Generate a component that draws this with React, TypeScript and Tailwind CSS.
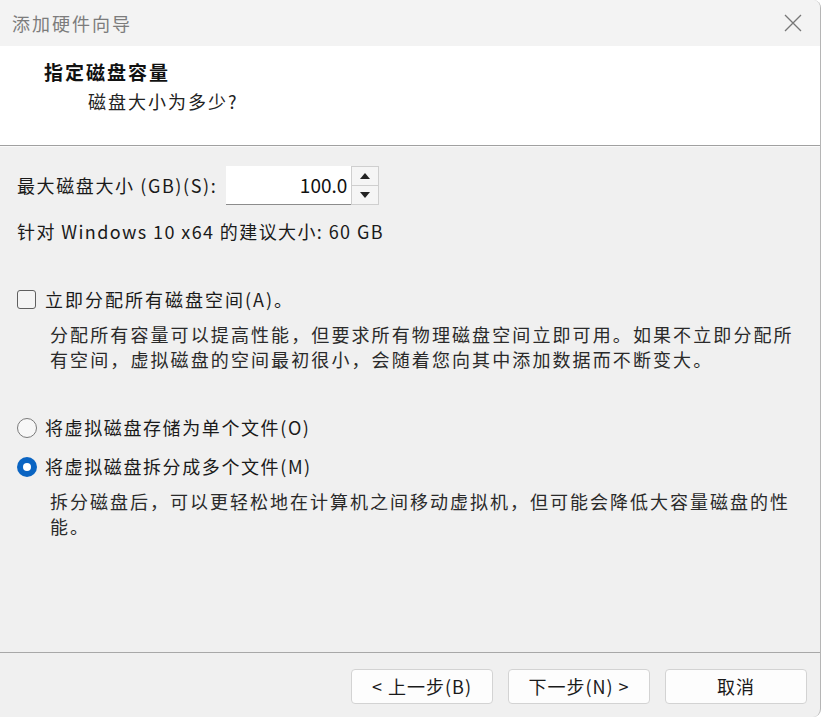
import React from 'react';

const cjk = { fontFamily: '"Noto Sans CJK SC", "Liberation Sans", sans-serif' };

function Spinner() {
  return (
    <div className="flex h-[39px] items-stretch">
      <div className="flex w-[125px] items-center justify-end border-b border-[#8c8c8c] bg-white pr-[4px] text-[19px] text-[#111]">
        100.0
      </div>
      <div className="flex w-[28px] flex-col border border-[#cfcfcf] bg-[#f5f5f5]">
        <div className="flex flex-1 items-center justify-center border-b border-[#cfcfcf]">
          <svg width="10" height="6" viewBox="0 0 10 6"><path d="M5 0 L10 6 L0 6 Z" fill="#222" /></svg>
        </div>
        <div className="flex flex-1 items-center justify-center">
          <svg width="10" height="6" viewBox="0 0 10 6"><path d="M0 0 L10 0 L5 6 Z" fill="#222" /></svg>
        </div>
      </div>
    </div>
  );
}

function Radio({ checked }: { checked?: boolean }) {
  if (checked) {
    return (
      <div className="flex h-[20px] w-[20px] items-center justify-center rounded-full bg-[#0a64c2]">
        <div className="h-[8px] w-[8px] rounded-full bg-white" />
      </div>
    );
  }
  return <div className="h-[20px] w-[20px] rounded-full border border-[#7a7a7a] bg-[#f7f7f7]" />;
}

function Btn({ children }: { children: React.ReactNode }) {
  return (
    <div className="flex h-[35px] w-[142px] items-center justify-center rounded-[4px] border border-[#d3d3d3] bg-[#fdfdfd] text-[18px] tracking-[1px] text-[#1a1a1a]">
      {children}
    </div>
  );
}

export default function App() {
  return (
    <div className="h-[717px] w-[823px] overflow-hidden bg-white" style={cjk}>
      <div className="flex h-[717px] w-[821px] flex-col overflow-hidden rounded-r-[8px] border-r border-[#b5b5b5] bg-[#f0f0f0]">
        {/* title bar */}
        <div className="flex h-[46px] shrink-0 items-center justify-between bg-[#f3f3f3] pl-[12px] pr-[18px]">
          <span className="text-[18px] tracking-[2px] text-[#7c7c7c]">添加硬件向导</span>
          <svg width="18" height="18" viewBox="0 0 18 18">
            <path d="M1 1 L17 17 M17 1 L1 17" stroke="#777" strokeWidth="1.3" fill="none" />
          </svg>
        </div>

        {/* header */}
        <div className="flex h-[99px] shrink-0 flex-col bg-white pl-[44px] pt-[14px]">
          <div className="text-[19px] font-bold leading-[24px] tracking-[2px] text-[#111]">指定磁盘容量</div>
          <div className="mt-[5px] pl-[44px] text-[18px] leading-[24px] tracking-[2px] text-[#222]">磁盘大小为多少?</div>
        </div>
        <div className="h-px shrink-0 bg-[#a0a0a0]" />
        <div className="h-px shrink-0 bg-[#fafafa]" />

        {/* body */}
        <div className="flex flex-1 flex-col px-[17px] pt-[19px] text-[#1a1a1a]">
          <div className="flex items-center gap-[9px]">
            <span className="whitespace-nowrap text-[18px] tracking-[1.6px]">最大磁盘大小 (GB)(S):</span>
            <Spinner />
          </div>
          <div className="mt-[11px] whitespace-nowrap text-[18px] leading-[30px] tracking-[1.4px]">针对 Windows 10 x64 的建议大小: 60 GB</div>

          <div className="mt-[40px] flex items-center gap-[9px]">
            <div className="h-[19px] w-[19px] rounded-[3px] border border-[#5f5f5f] bg-[#f4f4f4]" />
            <span className="text-[18px] tracking-[2px]">立即分配所有磁盘空间(A)。</span>
          </div>
          <div className="mt-[9px] whitespace-nowrap pl-[33px] text-[18px] leading-[25px] tracking-[2.1px] text-[#2a2a2a]">
            <div>分配所有容量可以提高性能，但要求所有物理磁盘空间立即可用。如果不立即分配所</div>
            <div>有空间，虚拟磁盘的空间最初很小，会随着您向其中添加数据而不断变大。</div>
          </div>

          <div className="mt-[42px] flex items-center gap-[8px]">
            <Radio />
            <span className="text-[18px] tracking-[1.6px]">将虚拟磁盘存储为单个文件(O)</span>
          </div>
          <div className="mt-[12px] flex items-center gap-[8px]">
            <Radio checked />
            <span className="text-[18px] tracking-[1.6px]">将虚拟磁盘拆分成多个文件(M)</span>
          </div>
          <div className="mt-[9px] whitespace-nowrap pl-[33px] text-[18px] leading-[25px] tracking-[2px] text-[#2a2a2a]">
            <div>拆分磁盘后，可以更轻松地在计算机之间移动虚拟机，但可能会降低大容量磁盘的性</div>
            <div>能。</div>
          </div>
        </div>

        {/* footer */}
        <div className="h-px shrink-0 bg-[#a8a8a8]" />
        <div className="flex h-[64px] shrink-0 items-start justify-end gap-[15px] pr-[13px] pt-[16px]">
          <Btn>&lt; 上一步(B)</Btn>
          <Btn>下一步(N) &gt;</Btn>
          <Btn>取消</Btn>
        </div>
      </div>
    </div>
  );
}
